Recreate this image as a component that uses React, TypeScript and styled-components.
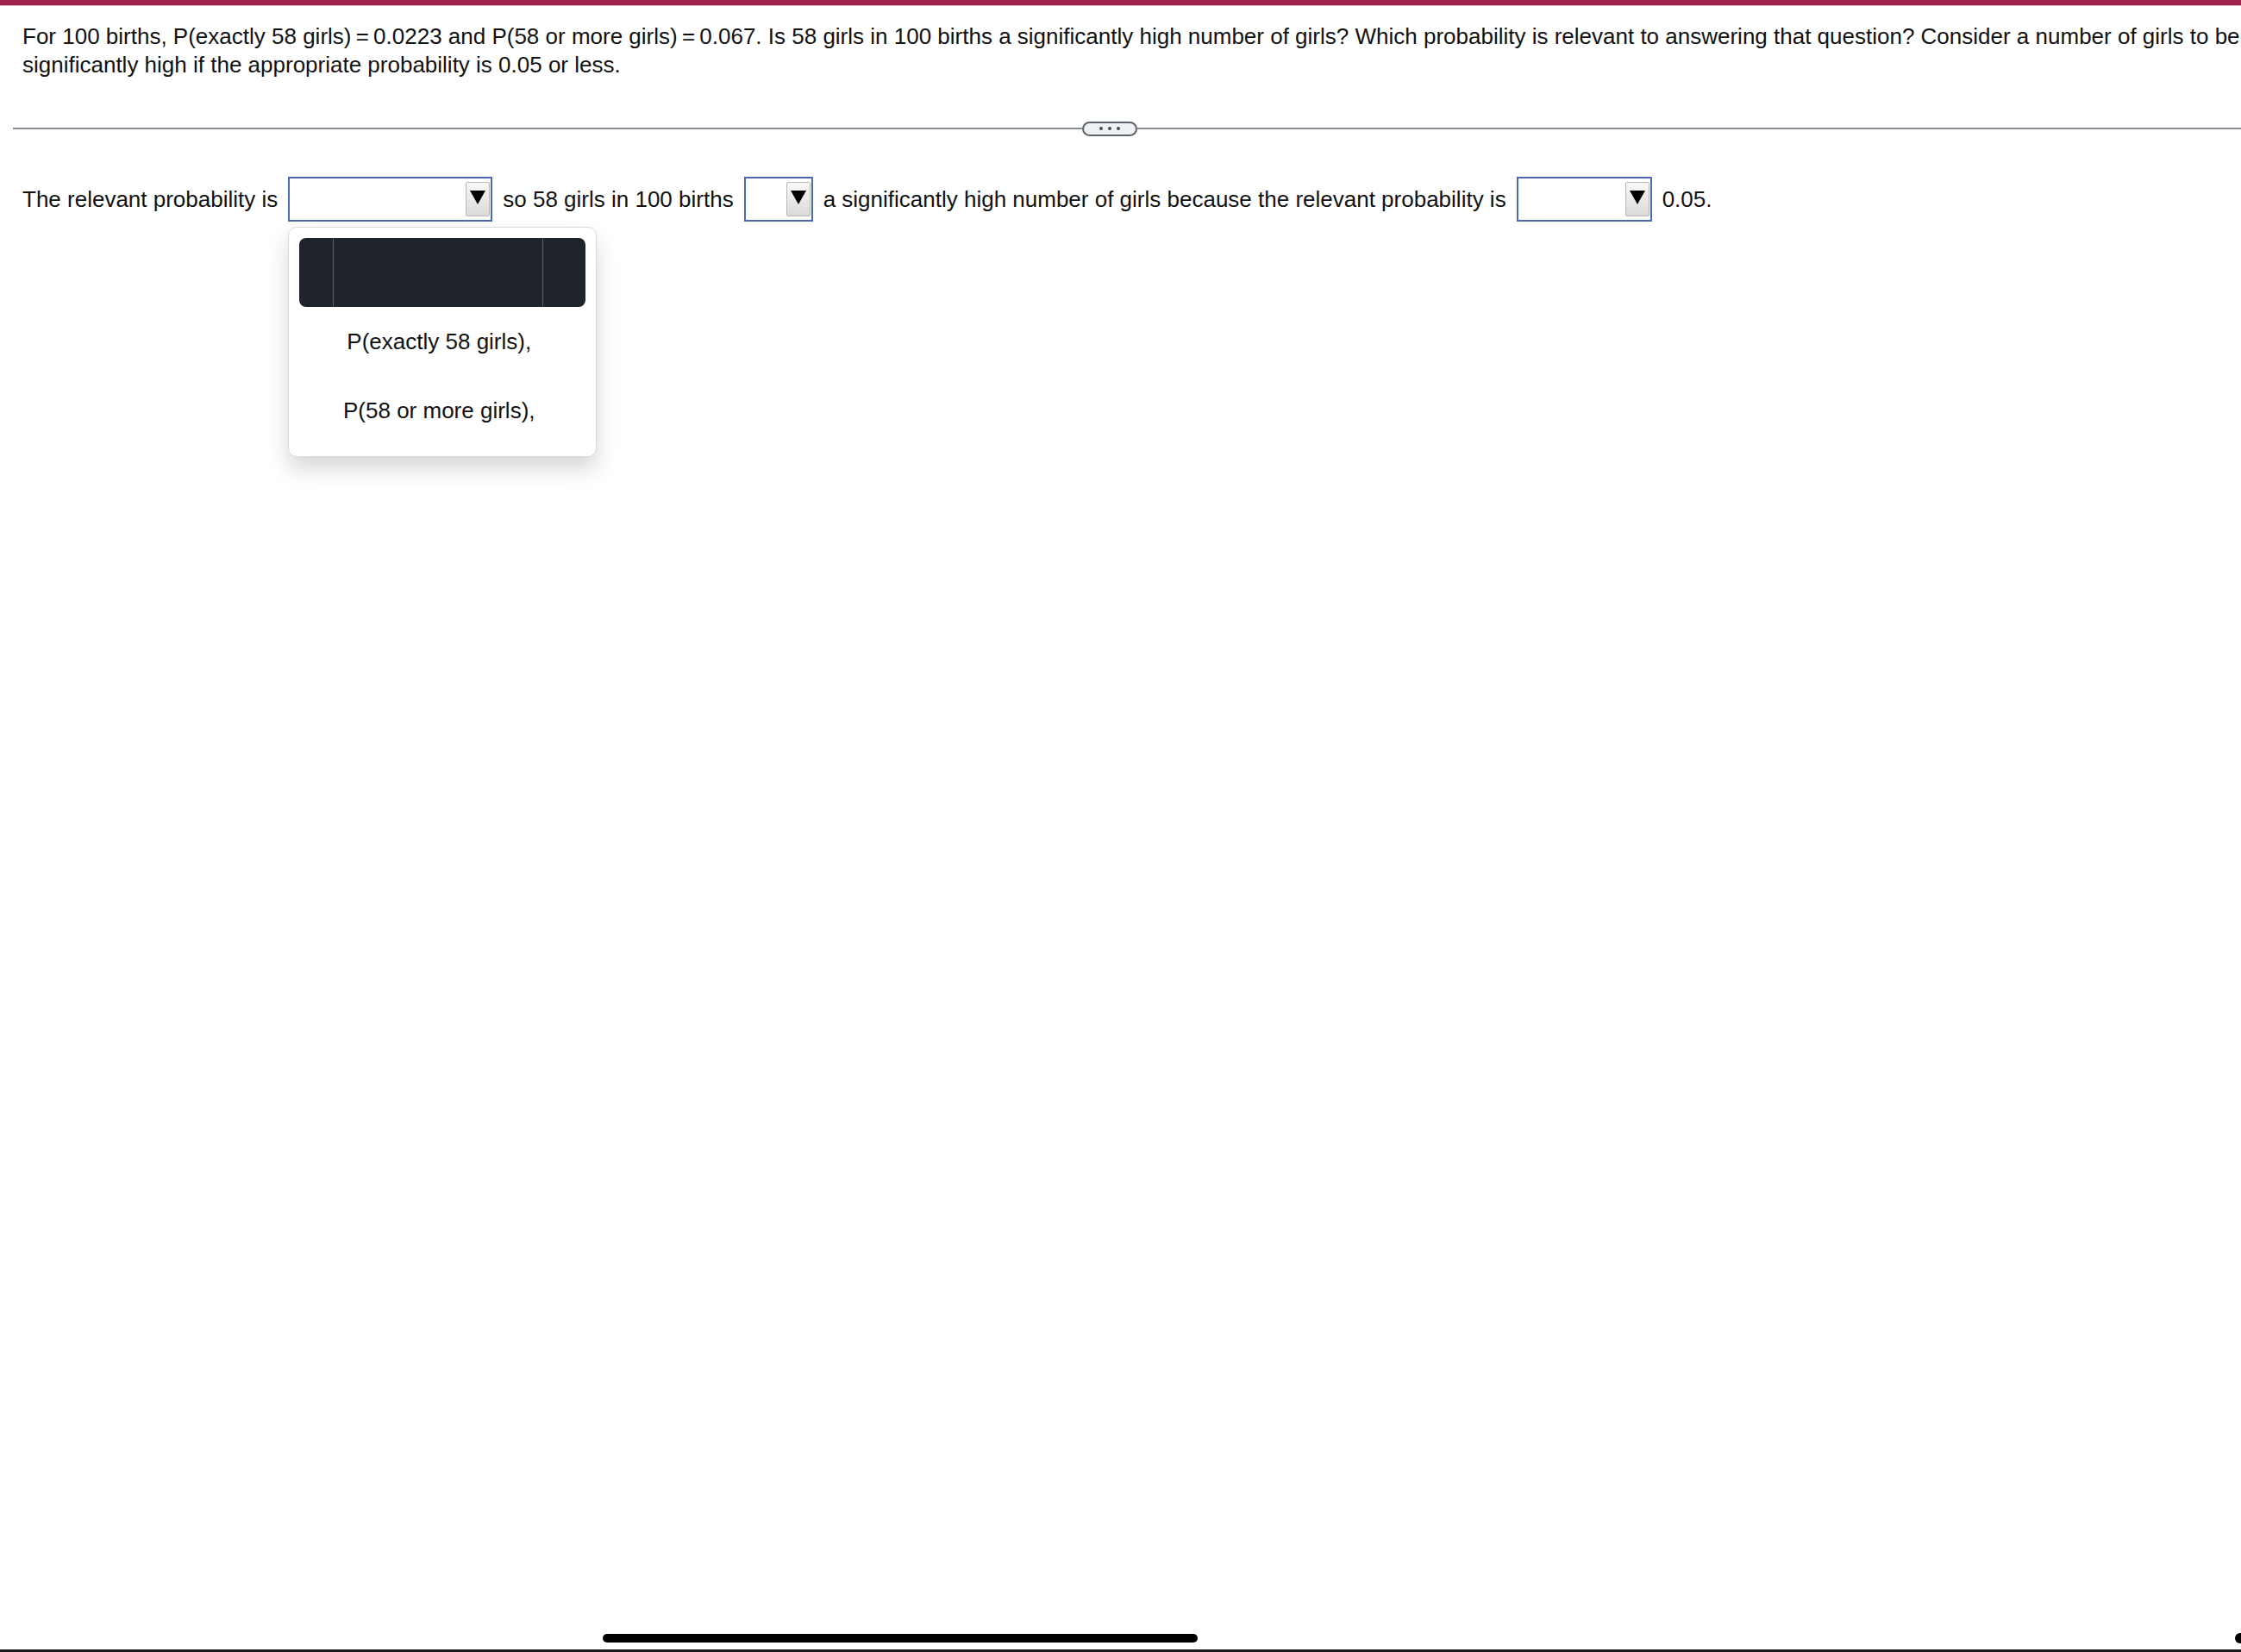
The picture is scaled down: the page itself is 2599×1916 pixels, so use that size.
import styled, { createGlobalStyle } from "styled-components";

const GlobalStyle = createGlobalStyle`
  html, body {
    margin: 0;
    padding: 0;
    background: #fff;
  }
  body {
    font-family: "Liberation Sans", Arial, sans-serif;
    color: #111;
  }
`;

const App = () => {
  return (
    <Page>
      <GlobalStyle />
      <TopBar />
      <Question>
        For 100 births, P(exactly 58 girls)&thinsp;=&thinsp;0.0223 and P(58 or more girls)&thinsp;=&thinsp;0.067. Is 58
        girls in 100 births a significantly high number of girls? Which probability is relevant to answering that
        question? Consider a number of girls to be
        <br />
        significantly high if the appropriate probability is 0.05 or less.
      </Question>

      <DividerRow>
        <Rule $width={1240} />
        <MorePill aria-label="more">
          <Dot />
          <Dot />
          <Dot />
        </MorePill>
        <Rule />
      </DividerRow>

      <AnswerRow>
        <span>The relevant probability is</span>
        <SelectBox $width={237}>
          <ArrowButton>
            <Triangle />
          </ArrowButton>
          <Menu>
            <MenuHeader>
              <span />
              <span />
              <span />
            </MenuHeader>
            <MenuOption>P(exactly 58 girls),</MenuOption>
            <MenuOption>P(58 or more girls),</MenuOption>
          </Menu>
        </SelectBox>
        <span>so 58 girls in 100 births</span>
        <SelectBox $width={80}>
          <ArrowButton>
            <Triangle />
          </ArrowButton>
        </SelectBox>
        <span>a significantly high number of girls because the relevant probability is</span>
        <SelectBox $width={157}>
          <ArrowButton>
            <Triangle />
          </ArrowButton>
        </SelectBox>
        <span>0.05.</span>
      </AnswerRow>

      <Footer>
        <HomeIndicator />
        <CornerDot />
      </Footer>
    </Page>
  );
};

export default App;

const Page = styled.div`
  display: flex;
  flex-direction: column;
  height: 100vh;
  overflow: hidden;
`;
const TopBar = styled.div`
  flex: none;
  height: 6px;
  background: #a2224d;
  border-bottom: 1px solid #d9b3c0;
`;
const Question = styled.p`
  margin: 19px 0 0;
  padding-left: 26px;
  font-size: 26px;
  line-height: 33px;
  white-space: nowrap;
`;
const DividerRow = styled.div`
  display: flex;
  align-items: center;
  height: 16px;
  margin: 49px 0 0 15px;
`;
const Rule = styled.div<{ $width?: number }>`
  height: 2px;
  background: #8b8e96;
  flex: ${(p) => (p.$width ? `0 0 ${p.$width}px` : "1")};
`;
const MorePill = styled.button`
  flex: none;
  width: 64px;
  height: 17px;
  box-sizing: border-box;
  padding: 0;
  border: 2px solid #5d636d;
  border-radius: 9px;
  background: #eff1f4;
  display: flex;
  align-items: center;
  justify-content: center;
  gap: 6px;
`;
const Dot = styled.span`
  width: 4px;
  height: 4px;
  border-radius: 50%;
  background: #474c55;
`;
const AnswerRow = styled.div`
  display: flex;
  align-items: center;
  gap: 12px;
  margin-top: 48px;
  padding-left: 26px;
  font-size: 26px;
  white-space: nowrap;
`;
const SelectBox = styled.div<{ $width: number }>`
  position: relative;
  flex: none;
  width: ${(p) => p.$width}px;
  height: 52px;
  box-sizing: border-box;
  border: 2px solid #4a68b4;
  background: #fff;
  display: flex;
  align-items: center;
  justify-content: flex-end;
  padding-right: 1px;
`;
const ArrowButton = styled.span`
  width: 28px;
  height: 40px;
  box-sizing: border-box;
  border: 1px solid #b8b8b8;
  border-radius: 2px;
  background: linear-gradient(#f8f8f8, #dadada);
  display: flex;
  justify-content: center;
  padding-top: 9px;
`;
const Triangle = styled.span`
  width: 0;
  height: 0;
  border-left: 9px solid transparent;
  border-right: 9px solid transparent;
  border-top: 16px solid #000;
`;
const Menu = styled.div`
  position: absolute;
  top: calc(100% + 8px);
  left: -2px;
  width: 358px;
  box-sizing: border-box;
  padding: 12px 12px 13px;
  border: 1px solid #dadada;
  border-radius: 10px;
  background: #fff;
  box-shadow: 0 14px 26px rgba(0, 0, 0, 0.16);
  z-index: 2;
`;
const MenuHeader = styled.div`
  display: grid;
  grid-template-columns: 39px 1fr 50px;
  height: 80px;
  border-radius: 8px;
  background: #1f232c;
  overflow: hidden;

  span + span {
    border-left: 1px solid #5b5f67;
  }
`;
const MenuOption = styled.div`
  height: 80px;
  padding-right: 8px;
  display: flex;
  align-items: center;
  justify-content: center;
  font-size: 26px;
  color: #111;
`;
const Footer = styled.div`
  margin-top: auto;
  display: flex;
  align-items: center;
  height: 23px;
  padding-bottom: 2px;
  border-bottom: 3px solid #1c1c1c;
`;
const HomeIndicator = styled.div`
  margin-left: 699px;
  width: 690px;
  height: 10px;
  border-radius: 5px;
  background: #000;
`;
const CornerDot = styled.div`
  margin-left: auto;
  margin-right: -5px;
  width: 12px;
  height: 12px;
  border-radius: 50%;
  background: #000;
`;
